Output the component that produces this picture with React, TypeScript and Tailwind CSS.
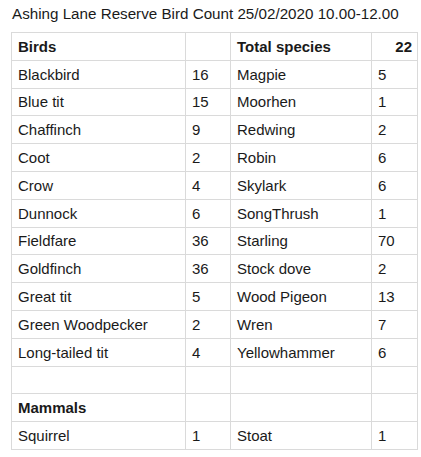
const rows: [string, string, string, string][] = [
  ["Blackbird", "16", "Magpie", "5"],
  ["Blue tit", "15", "Moorhen", "1"],
  ["Chaffinch", "9", "Redwing", "2"],
  ["Coot", "2", "Robin", "6"],
  ["Crow", "4", "Skylark", "6"],
  ["Dunnock", "6", "SongThrush", "1"],
  ["Fieldfare", "36", "Starling", "70"],
  ["Goldfinch", "36", "Stock dove", "2"],
  ["Great tit", "5", "Wood Pigeon", "13"],
  ["Green Woodpecker", "2", "Wren", "7"],
  ["Long-tailed tit", "4", "Yellowhammer", "6"],
];

const cell = "h-[27.8px] border border-[#dadada] px-[6px] align-middle";

const App = () => {
  return (
    <div className="h-[457px] w-[421px] bg-white text-[#1a1a1a] font-['Liberation_Sans',Arial,sans-serif]">
      <div className="pl-[12px] pt-[4px] text-[15.2px] leading-[20px]">
        Ashing Lane Reserve Bird Count 25/02/2020 10.00-12.00
      </div>
      <table className="ml-[11px] mt-[8px] w-[406px] table-fixed border-collapse text-[15px] leading-[17px]">
        <colgroup>
          <col className="w-[174px]" />
          <col className="w-[45px]" />
          <col className="w-[141px]" />
          <col className="w-[46px]" />
        </colgroup>
        <tbody>
          <tr>
            <td className={cell + " font-bold"}>Birds</td>
            <td className={cell}></td>
            <td className={cell + " font-bold"}>Total species</td>
            <td className={cell + " pr-[5px] text-right font-bold"}>22</td>
          </tr>
          {rows.map(([a, b, c, d]) => (
            <tr key={a}>
              <td className={cell}>{a}</td>
              <td className={cell}>{b}</td>
              <td className={cell}>{c}</td>
              <td className={cell}>{d}</td>
            </tr>
          ))}
          <tr>
            <td className={cell}></td>
            <td className={cell}></td>
            <td className={cell}></td>
            <td className={cell}></td>
          </tr>
          <tr>
            <td className={cell + " font-bold"}>Mammals</td>
            <td className={cell}></td>
            <td className={cell}></td>
            <td className={cell}></td>
          </tr>
          <tr>
            <td className={cell}>Squirrel</td>
            <td className={cell}>1</td>
            <td className={cell}>Stoat</td>
            <td className={cell}>1</td>
          </tr>
        </tbody>
      </table>
    </div>
  );
};

export default App;
